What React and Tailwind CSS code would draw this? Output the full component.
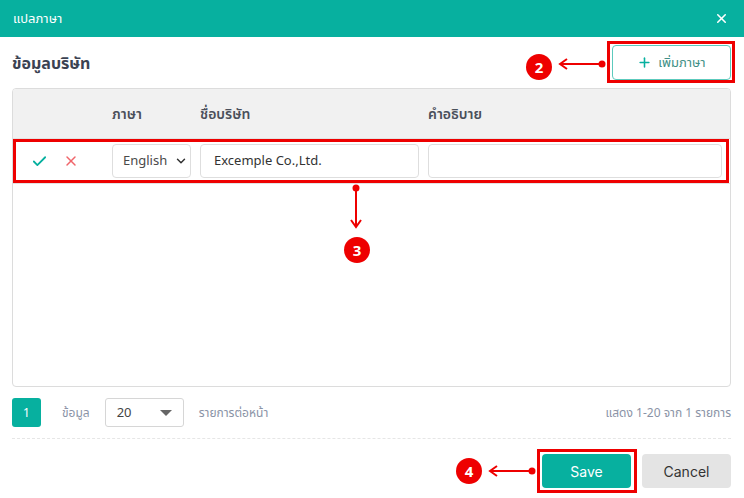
import React from 'react';
import { Check, X, Plus, ChevronDown } from 'lucide-react';

const FONT = "font-['Noto_Sans','Noto_Sans_Thai','DejaVu_Sans',sans-serif]";

function Badge({ n, className }) {
  return (
    <div className={`absolute flex h-[26px] w-[26px] items-center justify-center rounded-full bg-[#ee0000] text-[15px] font-bold text-white ${className}`}>
      {n}
    </div>
  );
}

function ArrowLeft({ className, width }) {
  return (
    <svg className={`absolute ${className}`} width={width} height="12" viewBox={`0 0 ${width} 12`}>
      <line x1="3" y1="6" x2={width - 4} y2="6" stroke="#ee0000" strokeWidth="2" />
      <polyline points="9,1 2,6 9,11" fill="none" stroke="#ee0000" strokeWidth="2" />
      <circle cx={width - 4} cy="6" r="3.5" fill="#ee0000" />
    </svg>
  );
}

export default function App() {
  return (
    <div className={`relative h-[498px] w-[744px] overflow-hidden bg-white ${FONT}`}>
      <div className="flex h-[37px] items-center justify-between bg-[#07b09f] pl-[13px] pr-[15px]">
        <span className="text-[13px] text-white">แปลภาษา</span>
        <X size={15} strokeWidth={2.5} className="text-white" />
      </div>

      <div className="pl-[12px] pr-[13px]">
        <div className="mt-[8px] flex h-[35px] items-center justify-between">
          <span className="text-[16px] font-bold text-[#3b4252]">ข้อมูลบริษัท</span>
          <button className="flex h-[35px] w-[119px] items-center justify-center gap-1.5 rounded-[4px] border border-[#5ccabd] text-[13px] text-[#3f8f86]">
            <Plus size={15} strokeWidth={2.5} className="text-[#07b09f]" />
            เพิ่มภาษา
          </button>
        </div>

        <div className="mt-[8px] h-[299px] overflow-hidden rounded-[4px] border border-[#dcdcdc]">
          <div className="flex h-[50px] items-center border-b border-[#e2e2e2] bg-[#f1f1f1] text-[14px] font-semibold text-[#4a4f5a]">
            <span className="ml-[99px] w-[88px]">ภาษา</span>
            <span className="w-[228px]">ชื่อบริษัท</span>
            <span>คำอธิบาย</span>
          </div>
          <div className="flex h-[45px] items-center border-b border-[#e2e2e2]">
            <Check size={17} strokeWidth={2.5} className="ml-[18px] text-[#07b09f]" />
            <X size={16} strokeWidth={2.2} className="ml-[15px] text-[#f0656a]" />
            <div className="ml-[33px] flex h-[34px] w-[79px] items-center justify-between rounded-[4px] border border-[#dedede] pl-[10px] pr-[2px] text-[13px] text-[#4a4a4a]">
              English
              <ChevronDown size={14} strokeWidth={2.5} className="text-[#333]" />
            </div>
            <div className="ml-[9px] flex h-[34px] w-[219px] items-center rounded-[4px] border border-[#dedede] pl-[13px] text-[13px] text-[#333]">
              Excemple Co.,Ltd.
            </div>
            <div className="ml-[9px] h-[34px] w-[294px] rounded-[4px] border border-[#dedede]" />
          </div>
        </div>

        <div className="mt-[11px] flex h-[29px] items-center text-[12px] text-[#8a93a6]">
          <div className="flex h-[29px] w-[29px] items-center justify-center rounded-[3px] bg-[#07b09f] text-white">1</div>
          <span className="ml-[21px]">ข้อมูล</span>
          <div className="ml-[15px] flex h-[29px] w-[79px] items-center justify-between rounded-[3px] border border-[#d6d6d6] pl-[11px] pr-[11px] text-[13px] text-[#444]">
            20
            <span className="h-0 w-0 border-x-[6px] border-t-[6px] border-x-transparent border-t-[#666]" />
          </div>
          <span className="ml-[15px]">รายการต่อหน้า</span>
          <span className="ml-auto">แสดง 1-20 จาก 1 รายการ</span>
        </div>

        <div className="mt-[11px] border-t border-dashed border-[#e6e6e6]" />

        <div className="mt-[15px] flex justify-end gap-[11px] font-['Inter',sans-serif] text-[14px]">
          <button className="h-[34px] w-[89px] rounded-[4px] bg-[#07b09f] text-white">Save</button>
          <button className="h-[34px] w-[89px] rounded-[4px] bg-[#e4e4e4] text-[#333]">Cancel</button>
        </div>
      </div>

      {/* annotations */}
      <div className="absolute left-[607px] top-[41px] h-[42px] w-[128px] border-[3px] border-[#ee0000]" />
      <ArrowLeft className="left-[558px] top-[58px]" width={48} />
      <Badge n="2" className="left-[526px] top-[54px]" />

      <div className="absolute left-[13px] top-[139px] h-[44px] w-[716px] border-[3px] border-[#ee0000]" />
      <svg className="absolute left-[349px] top-[183px]" width="14" height="48" viewBox="0 0 14 48">
        <circle cx="7" cy="5" r="3.5" fill="#ee0000" />
        <line x1="7" y1="5" x2="7" y2="44" stroke="#ee0000" strokeWidth="2" />
        <polyline points="2,37 7,44 12,37" fill="none" stroke="#ee0000" strokeWidth="2" />
      </svg>
      <Badge n="3" className="left-[344px] top-[237px]" />

      <div className="absolute left-[537px] top-[449px] h-[44px] w-[100px] border-[3px] border-[#ee0000]" />
      <ArrowLeft className="left-[488px] top-[465px]" width={48} />
      <Badge n="4" className="left-[456px] top-[458px]" />
    </div>
  );
}
